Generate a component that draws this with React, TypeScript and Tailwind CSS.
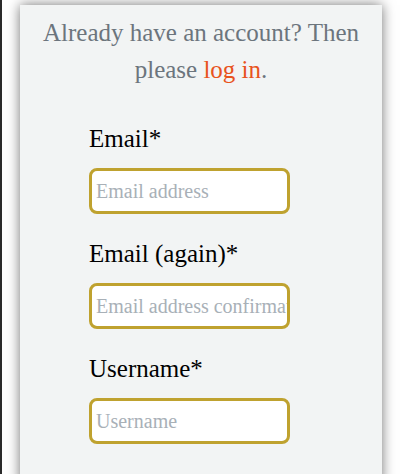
import React from "react";

const fields = [
  { label: "Email*", placeholder: "Email address", type: "email" },
  { label: "Email (again)*", placeholder: "Email address confirmation", type: "email" },
  { label: "Username*", placeholder: "Username", type: "text" },
];

const App = () => {
  return (
    <div className="h-[474px] w-[400px] overflow-hidden bg-white border-l-2 border-[#2a2a2a] [font-family:'Liberation_Serif','Times_New_Roman',serif]">
      <div className="ml-[18px] mt-[5px] w-[362px] h-[480px] bg-[#f2f4f4] shadow-[0_0_12px_rgba(0,0,0,0.55)] pt-[9px]">
        {/* Login hint */}
        <p className="text-center text-[25px] leading-[37px] text-[#6c757d] px-3">
          Already have an account? Then please{" "}
          <a href="#" className="text-[#e8531d] no-underline">
            log in
          </a>
          .
        </p>

        {/* Signup fields */}
        <form className="pl-[69px] mt-[37px] flex flex-col gap-[26px]">
          {fields.map((f) => (
            <div key={f.label} className="flex flex-col">
              <label className="text-[25px] leading-[28px] text-black mb-[15px]">{f.label}</label>
              <input
                type={f.type}
                placeholder={f.placeholder}
                className="w-[201px] h-[46px] border-[3px] border-[#bfa22f] rounded-[8px] bg-white pl-[4px] text-[20px] text-black placeholder:text-[#a8b0b7] outline-none"
              />
            </div>
          ))}
        </form>
      </div>
    </div>
  );
};

export default App;
